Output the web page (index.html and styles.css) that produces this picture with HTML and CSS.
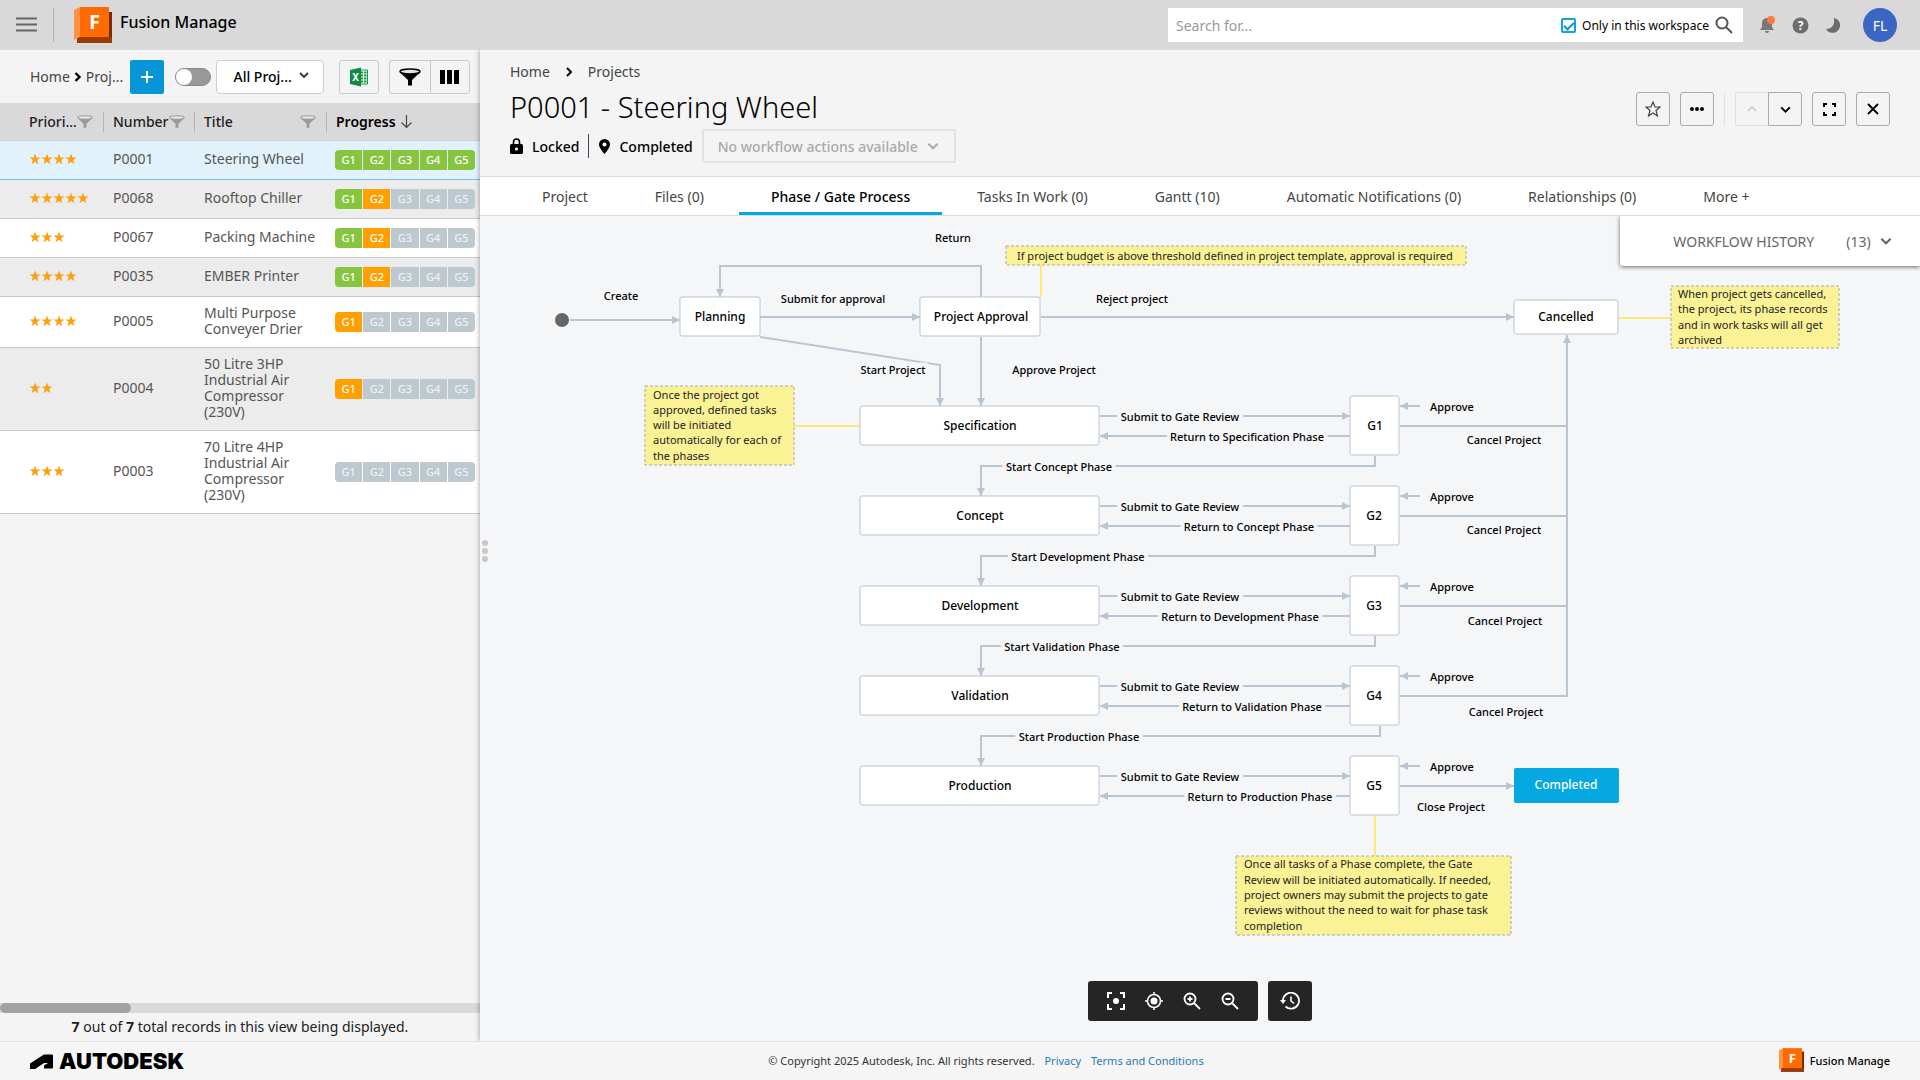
FILE: index.html
```html
<!DOCTYPE html>
<html lang="en">
<head>
    <meta charset="UTF-8">
    <meta name="viewport" content="width=device-width, initial-scale=1.0">
    <title>P0001 - Steering Wheel</title>
    <link rel="stylesheet" href="styles.css">
</head>
<body>
    <!-- shared icons -->
    <svg class="defs" width="0" height="0" aria-hidden="true">
        <symbol id="fusion" viewBox="0 0 38 36">
            <path d="M3 30h32l3-24v30H3z" fill="#8f3600"/>
            <path d="M35 5h3v31l-3-5z" fill="#7a2a00"/>
            <path d="M0 3 6 0h28a1 1 0 0 1 1 1v29H6l-6 3z" fill="#ff9345"/>
            <path d="M6 0h28a1 1 0 0 1 1 1v29H6z" fill="#ff6b00"/>
            <path d="M3 32l3-2h32v6H3z" fill="#9c3b00"/>
            <text x="15" y="22" class="fusion-letter">F</text>
        </symbol>
        <symbol id="funnel" viewBox="0 0 22 18">
            <path d="M1 4.500 9 12v5.500h4V12l8-7.500z" fill="currentColor"/>
            <ellipse cx="11" cy="3.500" rx="10" ry="2.500" class="funnel-top" stroke="currentColor" stroke-width="1.500"/>
        </symbol>
        <symbol id="chevron" viewBox="0 0 12 12">
            <path d="M2 4l4 4 4-4" fill="none" stroke="currentColor" stroke-width="1.800"/>
        </symbol>
        <symbol id="star" viewBox="0 0 12 12">
            <path d="M6 .5l1.400 4H11.500L8.200 7l1.200 4.200L6 8.700l-3.400 2.500L3.800 7 .5 4.500h4.100z" fill="#ff9f0c"/>
        </symbol>
    </svg>

    <header class="topbar">
        <button class="icon-button" type="button" aria-label="Menu">
            <svg width="21" height="16" viewBox="0 0 21 16"><path d="M0 1.500h21M0 7.500h21M0 13.500h21" stroke="#666" stroke-width="2"/></svg>
        </button>
        <span class="topbar-line"></span>
        <svg class="brand-logo" width="38" height="36"><use href="#fusion"/></svg>
        <span class="brand-name">Fusion Manage</span>
        <form class="search">
            <input class="search-text" type="text" placeholder="Search for..." aria-label="Search for">
            <input class="search-check" type="checkbox" id="workspaceOnly" checked>
            <label for="workspaceOnly">Only in this workspace</label>
            <button class="icon-button search-button" type="button" aria-label="Search">
                <svg width="18" height="18" viewBox="0 0 18 18" fill="none" stroke="#555" stroke-width="2"><circle cx="7" cy="7" r="5.500"/><path d="M11 11l6 6"/></svg>
            </button>
        </form>
        <button class="icon-button bell" type="button" aria-label="Notifications">
            <svg width="18" height="18" viewBox="0 0 18 18"><path d="M8 2a5 5 0 0 0-5 5v4l-2 3h14l-2-3V7a5 5 0 0 0-5-5zM6 15h4a2 2 0 0 1-4 0z" fill="#777"/><circle cx="12" cy="4" r="4" fill="#ff7a3d"/></svg>
        </button>
        <button class="icon-button help" type="button" aria-label="Help">
            <svg width="17" height="17" viewBox="0 0 17 17"><circle cx="8.500" cy="8.500" r="8" fill="#6d6d6d"/><text x="8.500" y="13" class="help-mark">?</text></svg>
        </button>
        <button class="icon-button moon" type="button" aria-label="Dark mode">
            <svg width="16" height="16" viewBox="0 0 16 16"><path d="M9 1a7.500 7.500 0 1 1-8 11c6 0 9-4 8-11z" fill="#6d6d6d"/></svg>
        </button>
        <button class="avatar" type="button">FL</button>
    </header>

    <div class="workspace">
        <aside class="records">
            <div class="toolbar">
                <nav class="crumbs">
                    <a href="#">Home</a>
                    <svg width="8" height="12" viewBox="0 0 8 12"><path d="M1.500 2l4 4-4 4" fill="none" stroke="#000" stroke-width="2.400"/></svg>
                    <a href="#">Proj...</a>
                </nav>
                <button class="add" type="button" aria-label="Add">
                    <svg width="12" height="12" viewBox="0 0 12 12"><path d="M6 0v12M0 6h12" stroke="#fff" stroke-width="2"/></svg>
                </button>
                <input class="toggle" type="checkbox" aria-label="Toggle view">
                <div class="view-select">
                    <select aria-label="View"><option>All Proj...</option></select>
                    <svg class="select-arrow" width="12" height="12"><use href="#chevron"/></svg>
                </div>
                <button class="tool excel" type="button" aria-label="Export to Excel">
                    <svg width="20" height="20" viewBox="0 0 20 20"><path d="M10 3h8.500v14H10z" fill="#fff" stroke="#12964a"/><path d="M12 5.500h2M15 5.500h2.500M12 8.500h2M15 8.500h2.500M12 11.500h2M15 11.500h2.500M12 14.500h2M15 14.500h2.500" stroke="#12964a" stroke-width="2"/><path d="M1 3l11-2.500v19L1 17z" fill="#0f8a43"/><text x="6.500" y="14" class="excel-mark">X</text></svg>
                </button>
                <div class="tool-group">
                    <button class="tool" type="button" aria-label="Filter"><svg class="funnel" width="22" height="18"><use href="#funnel"/></svg></button>
                    <button class="tool" type="button" aria-label="Columns"><svg width="20" height="14" viewBox="0 0 20 14"><path d="M0 0h5v14H0zM7 0h5v14H7zM14 0h5v14h-5z"/></svg></button>
                </div>
            </div>
            <table class="grid">
                <colgroup><col class="c-priority"><col class="c-number"><col class="c-title"><col class="c-progress"></colgroup>
                <thead>
                    <tr>
                        <th><div class="head">Priori...<svg width="16" height="13"><use href="#funnel"/></svg></div></th>
                        <th><div class="head">Number<svg width="16" height="13"><use href="#funnel"/></svg></div></th>
                        <th><div class="head head-wide">Title<svg width="16" height="13"><use href="#funnel"/></svg></div></th>
                        <th><div class="head sorted">Progress<svg width="11" height="14" viewBox="0 0 11 14"><path d="M5.500 0v12.500M.5 7.500l5 5 5-5" fill="none" stroke="#444" stroke-width="1.200"/></svg></div></th>
                    </tr>
                </thead>
                <tbody>
                    <tr class="selected">
                        <td><div class="stars"><svg><use href="#star"/></svg><svg><use href="#star"/></svg><svg><use href="#star"/></svg><svg><use href="#star"/></svg></div></td><td>P0001</td><td>Steering Wheel</td>
                        <td><div class="gates"><span class="done">G1</span><span class="done">G2</span><span class="done">G3</span><span class="done">G4</span><span class="done">G5</span></div></td>
                    </tr>
                    <tr>
                        <td><div class="stars"><svg><use href="#star"/></svg><svg><use href="#star"/></svg><svg><use href="#star"/></svg><svg><use href="#star"/></svg><svg><use href="#star"/></svg></div></td><td>P0068</td><td>Rooftop Chiller</td>
                        <td><div class="gates"><span class="done">G1</span><span class="active">G2</span><span>G3</span><span>G4</span><span>G5</span></div></td>
                    </tr>
                    <tr>
                        <td><div class="stars"><svg><use href="#star"/></svg><svg><use href="#star"/></svg><svg><use href="#star"/></svg></div></td><td>P0067</td><td>Packing Machine</td>
                        <td><div class="gates"><span class="done">G1</span><span class="active">G2</span><span>G3</span><span>G4</span><span>G5</span></div></td>
                    </tr>
                    <tr>
                        <td><div class="stars"><svg><use href="#star"/></svg><svg><use href="#star"/></svg><svg><use href="#star"/></svg><svg><use href="#star"/></svg></div></td><td>P0035</td><td>EMBER Printer</td>
                        <td><div class="gates"><span class="done">G1</span><span class="active">G2</span><span>G3</span><span>G4</span><span>G5</span></div></td>
                    </tr>
                    <tr>
                        <td><div class="stars"><svg><use href="#star"/></svg><svg><use href="#star"/></svg><svg><use href="#star"/></svg><svg><use href="#star"/></svg></div></td><td>P0005</td><td>Multi Purpose Conveyer Drier</td>
                        <td><div class="gates"><span class="active">G1</span><span>G2</span><span>G3</span><span>G4</span><span>G5</span></div></td>
                    </tr>
                    <tr>
                        <td><div class="stars"><svg><use href="#star"/></svg><svg><use href="#star"/></svg></div></td><td>P0004</td><td>50 Litre 3HP Industrial Air Compressor (230V)</td>
                        <td><div class="gates"><span class="active">G1</span><span>G2</span><span>G3</span><span>G4</span><span>G5</span></div></td>
                    </tr>
                    <tr>
                        <td><div class="stars"><svg><use href="#star"/></svg><svg><use href="#star"/></svg><svg><use href="#star"/></svg></div></td><td>P0003</td><td>70 Litre 4HP Industrial Air Compressor (230V)</td>
                        <td><div class="gates"><span>G1</span><span>G2</span><span>G3</span><span>G4</span><span>G5</span></div></td>
                    </tr>
                </tbody>
            </table>
            <div class="scrollbar"><div class="thumb"></div></div>
            <p class="count"><b>7</b> out of <b>7</b> total records in this view being displayed.</p>
        </aside>

        <main class="item">
            <div class="handle"><i></i><i></i><i></i></div>
            <div class="item-head">
                <div class="item-info">
                    <nav class="crumbs item-crumbs">
                        <a href="#">Home</a>
                        <svg width="8" height="12" viewBox="0 0 8 12"><path d="M2 2l4 4-4 4" fill="none" stroke="#000" stroke-width="2"/></svg>
                        <a href="#">Projects</a>
                    </nav>
                    <h1>P0001 - Steering Wheel</h1>
                    <div class="status">
                        <svg width="13" height="16" viewBox="0 0 13 16"><path d="M3.500 6V4a3 3 0 0 1 6 0v2" fill="none" stroke="#000" stroke-width="1.600"/><rect x="0" y="6" width="13" height="10" rx="1.500"/><circle cx="6.500" cy="11" r="1.500" fill="#fff"/></svg>
                        <span class="status-text">Locked</span>
                        <span class="status-line"></span>
                        <svg width="11" height="15" viewBox="0 0 11 15"><path d="M5.500 0A5.500 5.500 0 0 0 0 5.500C0 9 5.500 15 5.500 15S11 9 11 5.500A5.500 5.500 0 0 0 5.500 0z"/><circle cx="5.500" cy="5.500" r="2" fill="#fff"/></svg>
                        <span class="status-text">Completed</span>
                        <button class="workflow-actions" type="button" disabled>No workflow actions available <svg width="14" height="14"><use href="#chevron"/></svg></button>
                    </div>
                </div>
                <div class="actions">
                    <button class="action" type="button" aria-label="Bookmark"><svg width="16" height="16" viewBox="0 0 16 16"><path d="M8 1l2 5h5l-4 3.500 1.500 5.500L8 12l-4.500 3L5 9.500 1 6h5z" fill="none" stroke="#444" stroke-width="1.200"/></svg></button>
                    <button class="action" type="button" aria-label="More"><svg width="14" height="4" viewBox="0 0 14 4"><circle cx="2" cy="2" r="2"/><circle cx="7" cy="2" r="2"/><circle cx="12" cy="2" r="2"/></svg></button>
                    <span class="action-line"></span>
                    <div class="action-pair">
                        <button class="action" type="button" aria-label="Previous" disabled><svg width="12" height="12" viewBox="0 0 12 12"><path d="M2 8l4-4 4 4" fill="none" stroke="#ccc" stroke-width="1.500"/></svg></button>
                        <button class="action" type="button" aria-label="Next"><svg width="13" height="13"><use href="#chevron"/></svg></button>
                    </div>
                    <button class="action" type="button" aria-label="Full screen"><svg width="13" height="13" viewBox="0 0 13 13"><path d="M1 4V1h3M9 1h3v3M12 9v3H9M4 12H1V9" fill="none" stroke="#000" stroke-width="2"/></svg></button>
                    <button class="action" type="button" aria-label="Close"><svg width="12" height="12" viewBox="0 0 12 12"><path d="M1 1l10 10M11 1L1 11" stroke="#000" stroke-width="1.800"/></svg></button>
                </div>
            </div>
            <nav class="tabs">
                <a href="#">Project</a>
                <a href="#">Files (0)</a>
                <a href="#" class="current">Phase / Gate Process</a>
                <a href="#">Tasks In Work (0)</a>
                <a href="#">Gantt (10)</a>
                <a href="#">Automatic Notifications (0)</a>
                <a href="#">Relationships (0)</a>
                <a href="#">More +</a>
            </nav>
            <div class="canvas">
                <svg class="diagram" viewBox="480 216 1440 826">
                    <defs>
                        <marker id="arrow" viewBox="0 0 8 8" refX="8" refY="4" markerWidth="8" markerHeight="8" markerUnits="userSpaceOnUse" orient="auto"><path d="M0 0l8 4-8 4z" fill="#bac5d2"/></marker>
                    </defs>
                    <!-- note connectors -->
                    <g class="note-line">
                        <path d="M1041 265v32"/><path d="M794 426h66"/><path d="M1618 318h53"/><path d="M1375 816v40"/>
                    </g>
                    <!-- transitions -->
                    <g class="edge">
                        <path d="M570 320h110"/>
                        <path d="M760 317h160"/>
                        <path d="M981 297v-31H720v31"/>
                        <path d="M760 337l180 28v41"/>
                        <path d="M981 337v69"/>
                        <path d="M1041 317h473"/>
                        <path d="M1100 416h250"/><path d="M1350 436h-250"/><path d="M1420 406h-20"/>
                        <path d="M1100 506h250"/><path d="M1350 526h-250"/><path d="M1420 496h-20"/>
                        <path d="M1100 596h250"/><path d="M1350 616h-250"/><path d="M1420 586h-20"/>
                        <path d="M1100 686h250"/><path d="M1350 706h-250"/><path d="M1420 676h-20"/>
                        <path d="M1100 776h250"/><path d="M1350 796h-250"/><path d="M1420 766h-20"/>
                        <path d="M1375 456v10H981v30"/>
                        <path d="M1375 546v10H981v30"/>
                        <path d="M1375 636v10H981v30"/>
                        <path d="M1380 726v10H981v30"/>
                        <path d="M1400 696h167V335"/>
                        <path d="M1400 786h114"/>
                    </g>
                    <path class="branch" d="M1400 426h167M1400 516h167M1400 606h167"/>
                    <circle cx="562" cy="320" r="7" class="start"/>
                    <!-- states -->
                    <g class="state">
                        <rect x="680" y="297" width="80" height="39" rx="2"/><text x="720" y="321">Planning</text>
                        <rect x="920" y="297" width="120" height="39" rx="2"/><text x="981" y="321">Project Approval</text>
                        <rect x="1514" y="300" width="104" height="34" rx="2"/><text x="1566" y="321">Cancelled</text>
                        <rect x="860" y="406" width="239" height="39" rx="2"/><text x="980" y="430">Specification</text>
                        <rect x="860" y="496" width="239" height="39" rx="2"/><text x="980" y="520">Concept</text>
                        <rect x="860" y="586" width="239" height="39" rx="2"/><text x="980" y="610">Development</text>
                        <rect x="860" y="676" width="239" height="39" rx="2"/><text x="980" y="700">Validation</text>
                        <rect x="860" y="766" width="239" height="39" rx="2"/><text x="980" y="790">Production</text>
                        <rect x="1350" y="396" width="49" height="59" rx="2"/><text x="1375" y="430">G1</text>
                        <rect x="1350" y="486" width="49" height="59" rx="2"/><text x="1374" y="520">G2</text>
                        <rect x="1350" y="576" width="49" height="59" rx="2"/><text x="1374" y="610">G3</text>
                        <rect x="1350" y="666" width="49" height="59" rx="2"/><text x="1374" y="700">G4</text>
                        <rect x="1350" y="756" width="49" height="59" rx="2"/><text x="1374" y="790">G5</text>
                    </g>
                    <g class="state reached">
                        <rect x="1514" y="768" width="105" height="35" rx="2"/><text x="1566" y="789">Completed</text>
                    </g>
                    <!-- transition names -->
                    <g class="label">
                        <text x="621" y="300">Create</text>
                        <text x="833" y="303">Submit for approval</text>
                        <text x="953" y="242">Return</text>
                        <text x="1132" y="303">Reject project</text>
                        <text x="893" y="374">Start Project</text>
                        <text x="1054" y="374">Approve Project</text>
                        <text x="1180" y="421">Submit to Gate Review</text><text x="1247" y="441">Return to Specification Phase</text>
                        <text x="1180" y="511">Submit to Gate Review</text><text x="1249" y="531">Return to Concept Phase</text>
                        <text x="1180" y="601">Submit to Gate Review</text><text x="1240" y="621">Return to Development Phase</text>
                        <text x="1180" y="691">Submit to Gate Review</text><text x="1252" y="711">Return to Validation Phase</text>
                        <text x="1180" y="781">Submit to Gate Review</text><text x="1260" y="801">Return to Production Phase</text>
                        <text x="1059" y="471">Start Concept Phase</text>
                        <text x="1078" y="561">Start Development Phase</text>
                        <text x="1062" y="651">Start Validation Phase</text>
                        <text x="1079" y="741">Start Production Phase</text>
                        <text x="1452" y="411">Approve</text><text x="1504" y="444">Cancel Project</text>
                        <text x="1452" y="501">Approve</text><text x="1504" y="534">Cancel Project</text>
                        <text x="1452" y="591">Approve</text><text x="1505" y="625">Cancel Project</text>
                        <text x="1452" y="681">Approve</text><text x="1506" y="716">Cancel Project</text>
                        <text x="1452" y="771">Approve</text><text x="1451" y="811">Close Project</text>
                    </g>
                    <!-- notes -->
                    <g class="note">
                        <rect x="1006" y="246" width="460" height="19"/>
                        <text x="1017" y="260">If project budget is above threshold defined in project template, approval is required</text>
                        <rect x="645" y="386" width="149" height="79"/>
                        <text><tspan x="653" y="399">Once the project got</tspan><tspan x="653" y="414">approved, defined tasks</tspan><tspan x="653" y="429">will be initiated</tspan><tspan x="653" y="444">automatically for each of</tspan><tspan x="653" y="460">the phases</tspan></text>
                        <rect x="1671" y="286" width="168" height="62"/>
                        <text><tspan x="1678" y="298">When project gets cancelled,</tspan><tspan x="1678" y="313">the project, its phase records</tspan><tspan x="1678" y="329">and in work tasks will all get</tspan><tspan x="1678" y="344">archived</tspan></text>
                        <rect x="1236" y="856" width="275" height="79"/>
                        <text><tspan x="1244" y="868">Once all tasks of a Phase complete, the Gate</tspan><tspan x="1244" y="884">Review will be initiated automatically. If needed,</tspan><tspan x="1244" y="899">project owners may submit the projects to gate</tspan><tspan x="1244" y="914">reviews without the need to wait for phase task</tspan><tspan x="1244" y="930">completion</tspan></text>
                    </g>
                </svg>
                <button class="history" type="button">WORKFLOW HISTORY <span class="history-count">(13)</span> <svg width="14" height="14"><use href="#chevron"/></svg></button>
                <div class="canvas-tools">
                    <div class="canvas-group">
                        <button type="button" aria-label="Fit"><svg width="18" height="18" viewBox="0 0 18 18"><path d="M1 6V1h4M13 1h4v5M17 12v5h-4M5 17H1v-5" fill="none" stroke="#fff" stroke-width="2"/><circle cx="9" cy="9" r="3" fill="#fff"/></svg></button>
                        <button type="button" aria-label="Center"><svg width="18" height="18" viewBox="0 0 18 18"><circle cx="9" cy="9" r="6.500" fill="none" stroke="#fff" stroke-width="1.600"/><circle cx="9" cy="9" r="3.500" fill="#fff"/><path d="M9 0v3M9 15v3M0 9h3M15 9h3" stroke="#fff" stroke-width="1.600"/></svg></button>
                        <button type="button" aria-label="Zoom in"><svg width="18" height="18" viewBox="0 0 18 18" fill="none" stroke="#fff" stroke-width="1.800"><circle cx="7" cy="7" r="5.500"/><path d="M11 11l6 6M7 4.500v5M4.500 7h5"/></svg></button>
                        <button type="button" aria-label="Zoom out"><svg width="18" height="18" viewBox="0 0 18 18" fill="none" stroke="#fff" stroke-width="1.800"><circle cx="7" cy="7" r="5.500"/><path d="M11 11l6 6M4.500 7h5"/></svg></button>
                    </div>
                    <div class="canvas-group">
                        <button type="button" aria-label="History"><svg width="20" height="18" viewBox="0 0 20 18"><path d="M3 9a8 8 0 1 1 2.500 5.500" fill="none" stroke="#fff" stroke-width="1.800"/><path d="M0 8h6l-3 4z" fill="#fff"/><path d="M11 4.500V9l3 2.500" fill="none" stroke="#fff" stroke-width="1.600"/></svg></button>
                    </div>
                </div>
            </div>
        </main>
    </div>

    <footer class="footer">
        <div class="autodesk">
            <svg width="23" height="15" viewBox="0 0 23 15"><path d="M0 15V9.500L14 .5h8a1 1 0 0 1 1 1v3L14 5 5 15z"/><path d="M14 14.500v-3l4-2.500h-4V4h9v9.500a1 1 0 0 1-1 1z"/><path d="M5 15l9-6h4l-3-3.500h-4L2 12z"/></svg>
            <span>AUTODESK</span>
        </div>
        <div class="legal">© Copyright 2025 Autodesk, Inc. All rights reserved. <a href="#">Privacy</a> <a href="#">Terms and Conditions</a></div>
        <div class="footer-brand"><svg width="25" height="24"><use href="#fusion"/></svg>Fusion Manage</div>
    </footer>
</body>
</html>
```

FILE: styles.css
```css
* {
    box-sizing: border-box;
}

body {
    margin: 0;
    height: 100vh;
    display: flex;
    flex-direction: column;
    font-family: "Noto Sans", sans-serif;
    font-size: 14px;
    color: #333;
    background: #f5f5f5;
}

button,
input,
select {
    font: inherit;
    color: inherit;
    margin: 0;
}

button {
    display: flex;
    align-items: center;
    justify-content: center;
    padding: 0;
}

a {
    color: #444;
    text-decoration: none;
}

svg {
    flex: none;
}

.defs {
    display: none;
}

.icon-button {
    border: none;
    background: none;
}

/* top bar */
.topbar {
    display: flex;
    align-items: center;
    height: 50px;
    padding: 0 23px 0 16px;
    background: #d9d9d9;
}

.topbar-line {
    width: 1px;
    height: 34px;
    margin: 0 20px 0 16px;
    background: #b5b5b5;
}

.brand-name {
    margin: 0 auto 6px 8px;
    font-size: 16px;
    font-weight: 500;
    color: #000;
}

.fusion-letter {
    font: bold 20px "Noto Sans", sans-serif;
    fill: #fff;
}

.search {
    display: flex;
    align-items: center;
    width: 575px;
    height: 34px;
    padding: 0 10px 0 8px;
    background: #fff;
}

.search-text {
    flex: 1;
    min-width: 0;
    padding: 0;
    border: none;
    outline: none;
    background: none;
}

.search-text::placeholder {
    color: #999;
}

.search-check {
    appearance: none;
    display: grid;
    place-items: center;
    width: 15px;
    height: 15px;
    border: 2px solid #0fa5dc;
    border-radius: 2px;
}

.search-check:checked::after {
    content: "";
    width: 4px;
    height: 8px;
    border: solid #0696d7;
    border-width: 0 2px 2px 0;
    transform: rotate(45deg);
}

.search label {
    margin: 0 6px;
    font-size: 12px;
    color: #000;
}

.bell {
    margin-left: 16px;
}

.help {
    margin-left: 15px;
}

.help-mark {
    font: bold 12px "Noto Sans", sans-serif;
    text-anchor: middle;
    fill: #fff;
}

.moon {
    margin: 0 22px 0 16px;
}

.avatar {
    width: 34px;
    height: 34px;
    border: none;
    border-radius: 50%;
    background: #3c66c4;
    color: #fff;
}

.workspace {
    flex: 1;
    min-height: 0;
    display: flex;
}

/* record list */
.records {
    width: 480px;
    flex: none;
    display: flex;
    flex-direction: column;
    background: #f4f4f4;
}

.toolbar {
    display: flex;
    align-items: center;
    height: 53px;
    padding: 0 10px 0 30px;
}

.crumbs {
    display: flex;
    align-items: center;
    gap: 4px;
}

.toolbar .crumbs {
    width: 100px;
    white-space: nowrap;
}

.add {
    width: 34px;
    height: 34px;
    border: none;
    border-radius: 2px;
    background: #0696d7;
}

.toggle {
    appearance: none;
    width: 37px;
    height: 18px;
    margin: 0 5px 0 11px;
    border: 1px solid #888;
    border-radius: 9px;
    background: #999;
}

.toggle::before {
    content: "";
    display: block;
    width: 16px;
    height: 16px;
    border-radius: 50%;
    background: #fff;
}

.view-select {
    position: relative;
    width: 108px;
    margin-right: 15px;
}

.view-select select {
    appearance: none;
    width: 100%;
    height: 34px;
    padding: 0 16px;
    border: 1px solid #c8ccd6;
    border-radius: 4px;
    background: #fff;
    color: #000;
    font-weight: 500;
}

.select-arrow {
    position: absolute;
    right: 14px;
    top: 9px;
    pointer-events: none;
}

.tool {
    width: 40px;
    height: 34px;
    border: 1px solid #c4cad6;
    border-radius: 3px;
    background: #f4f4f4;
    color: #000;
}

.excel-mark {
    font: bold 10px "Noto Sans", sans-serif;
    text-anchor: middle;
    fill: #fff;
}

.tool-group {
    display: flex;
    margin-left: 10px;
}

.tool-group .tool:first-child {
    width: 41px;
    border-right: none;
    border-radius: 3px 0 0 3px;
}

.tool-group .tool:last-child {
    border-radius: 0 3px 3px 0;
}

.funnel-top {
    fill: #e4e4e4;
}

.grid {
    width: 100%;
    table-layout: fixed;
    border-collapse: separate;
    border-spacing: 0;
    color: #555;
}

.c-priority {
    width: 104px;
}

.c-number {
    width: 91px;
}

.c-title {
    width: 132px;
}

.grid th {
    height: 38px;
    padding: 0;
    background: #d9d9d9;
    border-bottom: 1px solid #ccc;
    color: #222;
    font-weight: 500;
    text-align: left;
}

.head {
    display: flex;
    align-items: center;
    height: 20px;
    padding-left: 9px;
    border-right: 1px solid #b5b5b5;
}

.head svg {
    color: #999;
}

th:first-child .head {
    padding-left: 29px;
}

.head-wide {
    justify-content: space-between;
    padding-right: 10px;
}

.sorted {
    gap: 5px;
    border: none;
    color: #000;
    font-weight: 600;
}

.grid td {
    height: 39px;
    padding: 8px 10px 10px 9px;
    border-bottom: 1px solid #c8c8c8;
    background: #fff;
    line-height: 16px;
}

.grid td:first-child {
    padding-left: 29px;
    padding-right: 0;
}

.grid td:last-child {
    padding: 0 0 0 8px;
}

.grid tr:nth-child(even) td {
    background: #ececec;
}

.grid .selected td {
    background: #e1f2fb;
    border-color: #6cc0ea;
}

.stars {
    display: flex;
}

.stars svg {
    width: 12px;
    height: 12px;
}

.gates {
    display: flex;
    gap: 1px;
    width: 140px;
    border-radius: 4px;
    overflow: hidden;
}

.gates span {
    flex: 1;
    background: #bec8cf;
    color: #eef1f3;
    font-size: 11px;
    font-weight: 500;
    line-height: 20px;
    text-align: center;
}

.gates .done {
    background: #87c540;
}

.gates .active {
    background: #ff9f00;
}

.gates .done,
.gates .active {
    color: #fff;
}

.scrollbar {
    height: 10px;
    margin-top: auto;
    background: #dadada;
}

.thumb {
    width: 131px;
    height: 10px;
    border-radius: 5px;
    background: #a2a2a2;
}

.count {
    margin: 0;
    line-height: 28px;
    text-align: center;
    color: #222;
}

/* item details */
.item {
    position: relative;
    flex: 1;
    min-width: 0;
    display: flex;
    flex-direction: column;
    background: #f5f6f8;
    box-shadow: 0 0 5px rgba(0, 0, 0, 0.4);
    clip-path: inset(0 0 0 -8px);
}

.handle {
    position: absolute;
    left: 2px;
    top: 490px;
    display: flex;
    flex-direction: column;
    gap: 2px;
}

.handle i {
    width: 6px;
    height: 6px;
    border-radius: 50%;
    background: #c8c8c8;
}

.item-head {
    display: flex;
    justify-content: space-between;
    height: 126px;
    padding: 12px 30px 0;
    background: #f4f4f4;
}

.item-crumbs {
    gap: 15px;
    line-height: 20px;
}

h1 {
    margin: 5px 0 2px;
    font-size: 29px;
    font-weight: 300;
    line-height: 40px;
    color: #000;
}

.status {
    display: flex;
    align-items: center;
    color: #000;
}

.status-text {
    margin: 0 9px;
    font-weight: 500;
}

.status-line {
    width: 1px;
    height: 24px;
    margin-right: 10px;
    background: #3c4664;
}

.workflow-actions {
    gap: 8px;
    height: 34px;
    padding: 0 14px;
    border: 2px solid #e2e2e2;
    border-radius: 3px;
    background: none;
    color: #aaa;
    font-weight: 500;
}

.actions {
    display: flex;
    align-items: center;
    gap: 10px;
    height: 34px;
    margin-top: 30px;
}

.action {
    width: 34px;
    height: 34px;
    border: 1px solid #aaa;
    border-radius: 3px;
    background: none;
    color: #000;
}

.action-line {
    width: 1px;
    height: 34px;
    background: #e2e2e2;
}

.action-pair {
    display: flex;
}

.action-pair .action:first-child {
    width: 33px;
    border-color: #e0e0e0;
    border-right: none;
    border-radius: 3px 0 0 3px;
}

.action-pair .action:last-child {
    border-radius: 0 3px 3px 0;
}

.tabs {
    display: flex;
    gap: 3px;
    height: 40px;
    padding-left: 30px;
    border-top: 1px solid #dcdcdc;
    border-bottom: 1px solid #dcdcdc;
    background: #fff;
}

.tabs a {
    padding: 0 32px;
    line-height: 40px;
    white-space: nowrap;
}

.tabs .current {
    border-bottom: 3px solid #05a8e1;
    color: #000;
    font-weight: 500;
}

.canvas {
    position: relative;
    flex: 1;
    min-height: 0;
    overflow: hidden;
}

.diagram {
    display: block;
    width: 100%;
}

.edge path {
    fill: none;
    stroke: #bac5d2;
    stroke-width: 2;
    marker-end: url(#arrow);
}

.branch {
    stroke: #bac5d2;
    stroke-width: 2;
}

.start {
    fill: #666;
}

.state rect {
    fill: #fff;
    stroke: #bac5d2;
}

.state text {
    font-size: 12px;
    font-weight: 500;
    text-anchor: middle;
    fill: #000;
}

.reached rect {
    fill: #05a8e1;
    stroke: none;
}

.reached text {
    fill: #fff;
}

.label text {
    font-size: 11px;
    font-weight: 500;
    text-anchor: middle;
    fill: #000;
    stroke: #f5f6f8;
    stroke-width: 8px;
    paint-order: stroke;
}

.note-line path {
    stroke: #fbe97a;
    stroke-width: 2;
}

.note rect {
    fill: #fbf296;
    stroke: #aaa;
    stroke-dasharray: 3 2;
}

.note text {
    font-size: 11px;
    fill: #222;
}

.history {
    position: absolute;
    top: 0;
    right: 0;
    width: 300px;
    height: 50px;
    padding-left: 26px;
    border: none;
    border-radius: 0 0 0 3px;
    background: #fff;
    box-shadow: 0 1px 4px rgba(0, 0, 0, 0.6);
    color: #666;
}

.history-count {
    margin: 0 8px 0 32px;
}

.canvas-tools {
    position: absolute;
    bottom: 20px;
    left: 50%;
    transform: translateX(-50%);
    display: flex;
    gap: 10px;
}

.canvas-group {
    display: flex;
    padding: 0 9px;
    border-radius: 3px;
    background: #252525;
}

.canvas-group:last-child {
    padding: 0 3px;
}

.canvas-group button {
    width: 38px;
    height: 40px;
    border: none;
    background: none;
}

/* footer */
.footer {
    display: flex;
    align-items: center;
    justify-content: space-between;
    height: 39px;
    padding: 0 30px;
    border-top: 1px solid #e2e2e2;
    background: #f5f5f5;
    font-size: 11px;
}

.autodesk {
    flex: 1;
    display: flex;
    align-items: center;
    gap: 6px;
    font: 900 22px Inter, sans-serif;
    color: #000;
}

.legal {
    padding: 0 0 2px 52px;
}

.legal a {
    margin-left: 7px;
    color: #1f7bb6;
}

.footer-brand {
    flex: 1;
    display: flex;
    align-items: center;
    justify-content: flex-end;
    gap: 6px;
    padding-bottom: 2px;
    color: #000;
    font-weight: 500;
}
```
